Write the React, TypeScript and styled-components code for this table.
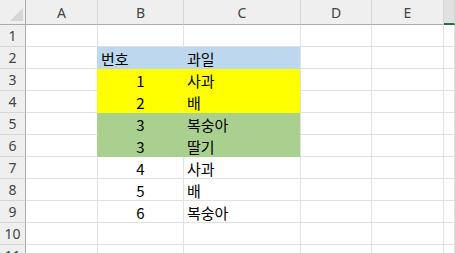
import React from "react";
import styled, { createGlobalStyle } from "styled-components";

const GRID = "#e1e1e1";
const HEAD_BG = "#efefef";
const HEAD_EDGE = "#ababab";
const HEAD_SEP = "#d5d5d5";
const BLUE = "#bdd7ee";
const YELLOW = "#ffff00";
const GREEN = "#a9d08e";

const Global = createGlobalStyle`
  html, body {
    margin: 0;
    padding: 0;
    background: #ffffff;
    overflow: hidden;
  }
`;

const Sheet = styled.div`
  display: grid;
  grid-template-columns: 26px 72px 86px 117px 71px 72px 1fr;
  grid-template-rows: 25px repeat(11, 22px);
  width: 455px;
  height: 253px;
  overflow: hidden;
  font-family: "Noto Sans CJK KR", "Noto Sans", sans-serif;
`;

const Corner = styled.div`
  box-sizing: border-box;
  background: ${HEAD_BG};
  border-right: 1px solid ${HEAD_EDGE};
  border-bottom: 1px solid ${HEAD_EDGE};
  display: flex;
  align-items: flex-end;
  justify-content: flex-end;
  padding: 0 2px 3px 0;
`;

const CornerMark = styled.div`
  width: 0;
  height: 0;
  border-left: 13px solid transparent;
  border-bottom: 13px solid #d6d6d6;
`;

const ColHeader = styled.div<{ $active?: boolean }>`
  box-sizing: border-box;
  display: flex;
  align-items: center;
  justify-content: center;
  background: ${(p) => (p.$active ? "#e0e0e0" : HEAD_BG)};
  border-right: 1px solid ${HEAD_SEP};
  border-bottom: ${(p) => (p.$active ? "2px solid #217346" : `1px solid ${HEAD_EDGE}`)};
  font-family: "Noto Sans", "Open Sans", sans-serif;
  font-size: 14px;
  color: #444444;
  line-height: 1;
  padding-top: 1px;
`;

const RowHeader = styled.div`
  box-sizing: border-box;
  display: flex;
  align-items: center;
  justify-content: center;
  background: ${HEAD_BG};
  border-right: 1px solid ${HEAD_EDGE};
  border-bottom: 1px solid ${HEAD_SEP};
  font-family: "Noto Sans", "Open Sans", sans-serif;
  font-size: 14px;
  color: #444444;
  line-height: 1;
  padding-top: 1px;
`;

const Cell = styled.div<{
  $bg?: string;
  $right?: string;
  $bottom?: string;
  $align?: "left" | "center";
}>`
  box-sizing: border-box;
  display: flex;
  align-items: center;
  justify-content: ${(p) => (p.$align === "center" ? "center" : "flex-start")};
  padding: 1px 3px 0 3px;
  background: ${(p) => p.$bg ?? "#ffffff"};
  border-right: 1px solid ${(p) => p.$right ?? GRID};
  border-bottom: 1px solid ${(p) => p.$bottom ?? GRID};
  font-size: 15px;
  line-height: 1;
  color: #000000;
  white-space: nowrap;
`;

type Row = { no?: string; fruit?: string; fill?: string; lastFill?: boolean };

const rows: Row[] = [
  {},
  { no: "번호", fruit: "과일", fill: BLUE },
  { no: "1", fruit: "사과", fill: YELLOW },
  { no: "2", fruit: "배", fill: YELLOW },
  { no: "3", fruit: "복숭아", fill: GREEN },
  { no: "3", fruit: "딸기", fill: GREEN },
  { no: "4", fruit: "사과" },
  { no: "5", fruit: "배" },
  { no: "6", fruit: "복숭아" },
  {},
  {},
];

const columns = ["A", "B", "C", "D", "E"];

export default function App() {
  return (
    <>
      <Global />
      <Sheet>
        <Corner>
          <CornerMark />
        </Corner>
        {columns.map((c) => (
          <ColHeader key={c}>{c}</ColHeader>
        ))}
        <ColHeader $active />

        {rows.map((r, i) => {
          const n = i + 1;
          const header = n === 2;
          return (
            <React.Fragment key={n}>
              <RowHeader>{n}</RowHeader>
              <Cell $right={r.fill} />
              <Cell
                $bg={r.fill}
                $right={r.fill}
                $bottom={r.fill}
                $align={header ? "left" : "center"}
              >
                {r.no}
              </Cell>
              <Cell $bg={r.fill} $bottom={r.fill}>
                {r.fruit}
              </Cell>
              <Cell />
              <Cell />
              <Cell />
            </React.Fragment>
          );
        })}
      </Sheet>
    </>
  );
}
